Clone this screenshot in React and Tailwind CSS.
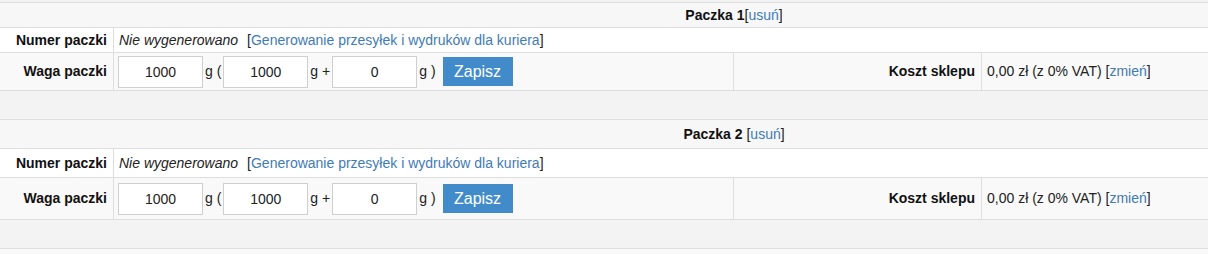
const sections = [
  { n: 1, title: "Paczka 1", space: false, head: "h-[24px]", num: "h-[24px]", waga: "h-[37px]", gap: "h-[28px]", top: true },
  { n: 2, title: "Paczka 2", space: true, head: "h-[28px]", num: "h-[28px]", waga: "h-[41px]", gap: "h-[28px]", top: false },
];

const Link = ({ children }) => (
  <span className="text-[#222]">
    [<span className="text-[#3f7bb6]">{children}</span>]
  </span>
);

const WeightInput = ({ value }) => (
  <input
    type="text"
    defaultValue={value}
    className="w-[85px] h-[32px] border border-[#cfcfcf] bg-white text-center text-[14px] text-[#222] outline-none"
  />
);

const Section = ({ s }) => (
  <div>
    <div
      className={`${s.head} box-content flex items-center justify-center bg-[#f7f7f7] border-b border-[#dedede] ${
        s.top ? "border-t" : ""
      }`}
    >
      <b className="text-[#111]">{s.title}</b>
      {s.space && <span>&nbsp;</span>}
      <Link>usuń</Link>
    </div>

    <div className={`${s.num} box-content flex bg-white border-b border-[#dedede]`}>
      <div className="w-[114px] border-r border-[#dedede] flex items-center justify-end pr-[6px] font-bold text-[#111]">
        Numer paczki
      </div>
      <div className="flex items-center pl-[5px] gap-[9px]">
        <i className="text-[#222]">Nie wygenerowano</i>
        <Link>Generowanie przesyłek i wydruków dla kuriera</Link>
      </div>
    </div>

    <div className={`${s.waga} box-content flex bg-[#f9f9f9] border-b border-[#dedede]`}>
      <div className="w-[114px] border-r border-[#dedede] flex items-center justify-end pr-[6px] font-bold text-[#111]">
        Waga paczki
      </div>
      <div className="w-[620px] border-r border-[#dedede] flex items-center pl-[4px] gap-[2px] text-[#222]">
        <WeightInput value="1000" />
        <span>g (</span>
        <WeightInput value="1000" />
        <span>g +</span>
        <WeightInput value="0" />
        <span>g )</span>
        <button className="ml-[5px] w-[70px] h-[29px] bg-[#428bca] text-white text-[16px]">
          Zapisz
        </button>
      </div>
      <div className="w-[248px] border-r border-[#dedede] flex items-center justify-end pr-[6px] font-bold text-[#111]">
        Koszt sklepu
      </div>
      <div className="flex-1 flex items-center pl-[5px] text-[#222]">
        0,00 zł (z 0% VAT)&nbsp;<Link>zmień</Link>
      </div>
    </div>

    <div className={`${s.gap} box-content bg-[#f3f3f3] border-b border-[#dedede]`} />
  </div>
);

export default function App() {
  return (
    <div
      className="w-[1208px] h-[254px] overflow-hidden bg-[#f9f9f9] text-[14px]"
      style={{ fontFamily: '"Liberation Sans", Arial, sans-serif' }}
    >
      <div className="w-[1468px] pt-[2px] bg-[#f3f3f3]">
        {sections.map((s) => (
          <Section key={s.n} s={s} />
        ))}
      </div>
    </div>
  );
}
